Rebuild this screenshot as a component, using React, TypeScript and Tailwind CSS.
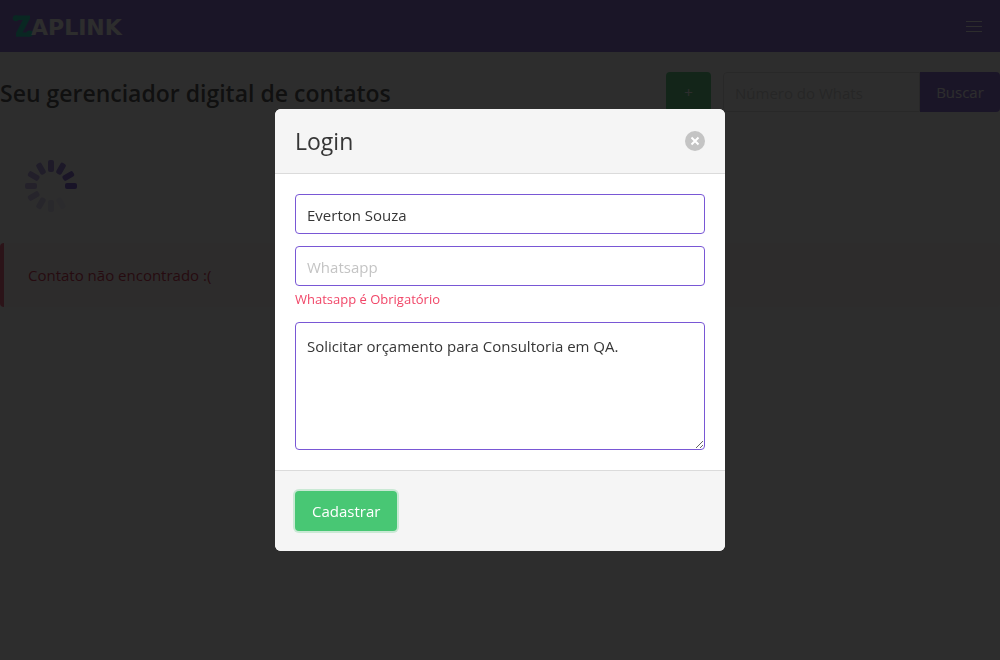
import React from "react";

const spokes = Array.from({ length: 12 }, (_, i) => i);

function Logo() {
  return (
    <a href="#" aria-label="Zaplink" className="flex items-center px-3">
      <svg width="21" height="24" viewBox="0 0 21 24" fill="#00d1b2" aria-hidden="true">
        <path d="M3.5 1.4H18V4.4L10.6 18.4H17.4V22.8H4V19L10.8 6H3.5Z" />
        <circle cx="3.8" cy="4.2" r="3" />
        <circle cx="17.6" cy="19.6" r="3.2" />
      </svg>
      <span className="-ml-0.5 pt-1 font-['DejaVu_Sans',sans-serif] text-[22px] leading-6 font-bold text-white">
        APLINK
      </span>
    </a>
  );
}

function Spinner() {
  return (
    <svg width="102" height="100" viewBox="-1 -1 102 100" role="img" aria-label="Carregando">
      {spokes.map((i) => (
        <rect
          key={i}
          x="64"
          y="47"
          width="12"
          height="6"
          rx="2"
          fill="#6a48d0"
          opacity={i === 0 ? 1 : (i - 1) / 11}
          transform={`rotate(${i * 30} 50 50)`}
        />
      ))}
    </svg>
  );
}

function Page() {
  return (
    <div>
      <nav className="flex h-[52px] justify-between bg-[#7957d5]">
        <Logo />
        <button type="button" aria-label="Menu" className="flex w-[52px] flex-col items-center justify-center gap-1">
          <span className="h-px w-4 bg-white" />
          <span className="h-px w-4 bg-white" />
          <span className="h-px w-4 bg-white" />
        </button>
      </nav>
      <main className="pt-5">
        <div className="flex items-start justify-between">
          <h1 className="text-[23px] leading-[43px] font-semibold text-[#363636]">Seu gerenciador digital de contatos</h1>
          <form className="flex" onSubmit={(e) => e.preventDefault()}>
            <button type="button" className="mr-3 h-10 w-[45px] rounded bg-[#48c774] text-white">
              +
            </button>
            <input
              type="text"
              aria-label="Número do Whats"
              placeholder="Número do Whats"
              className="h-10 w-[197px] rounded-l border border-[#dbdbdb] px-[11px] pt-0.5 placeholder:text-[#cccccc]"
            />
            <button type="submit" className="h-10 w-20 rounded-r bg-[#7957d5] font-medium text-white">
              Buscar
            </button>
          </form>
        </div>
        <div className="mt-5">
          <Spinner />
        </div>
        <div className="mt-2 rounded border-l-4 border-[#f14668] bg-[#fff5f7] px-6 py-5 leading-6 text-[#cc0f35]">
          Contato não encontrado :(
        </div>
      </main>
    </div>
  );
}

function LoginModal() {
  const field = "block w-full rounded border border-[#7957d5] bg-white px-[11px] text-[#363636] placeholder:text-[#c4c4c4]";
  return (
    <div className="fixed inset-0 flex items-center justify-center bg-[#0a0a0a]/86">
      <form
        role="dialog"
        aria-modal="true"
        aria-labelledby="modal-title"
        onSubmit={(e) => e.preventDefault()}
        className="w-[450px] overflow-hidden rounded-md bg-white"
      >
        <header className="flex items-center justify-between border-b border-[#dbdbdb] bg-[#f5f5f5] p-5">
          <h2 id="modal-title" className="text-[23px] leading-6 text-[#363636]">
            Login
          </h2>
          <button type="button" aria-label="Fechar" className="flex size-5 items-center justify-center rounded-full bg-[#c4c4c4]">
            <svg width="10" height="10" viewBox="0 0 10 10" stroke="white" strokeWidth="2" aria-hidden="true">
              <path d="M1.5 1.5L8.5 8.5M8.5 1.5L1.5 8.5" />
            </svg>
          </button>
        </header>
        <div className="p-5">
          <input type="text" aria-label="Nome" defaultValue="Everton Souza" className={`${field} h-10 pt-0.5`} />
          <input type="text" aria-label="Whatsapp" placeholder="Whatsapp" className={`${field} mt-3 h-10 pt-0.5`} />
          <small className="mb-[11px] block pt-px text-[13px] leading-6 text-[#f14668]">Whatsapp é Obrigatório</small>
          <textarea
            aria-label="Assunto"
            defaultValue="Solicitar orçamento para Consultoria em QA."
            className={`${field} h-32 resize py-[11px] leading-6`}
          />
        </div>
        <footer className="border-t border-[#dbdbdb] bg-[#f5f5f5] p-5">
          <button type="submit" className="block h-10 rounded bg-[#48c774] px-[17px] font-medium text-white ring-2 ring-[#48c774]/25">
            Cadastrar
          </button>
        </footer>
      </form>
    </div>
  );
}

export default function App() {
  return (
    <div className="font-['Open_Sans',sans-serif] text-[15px] leading-6">
      <Page />
      <LoginModal />
    </div>
  );
}
